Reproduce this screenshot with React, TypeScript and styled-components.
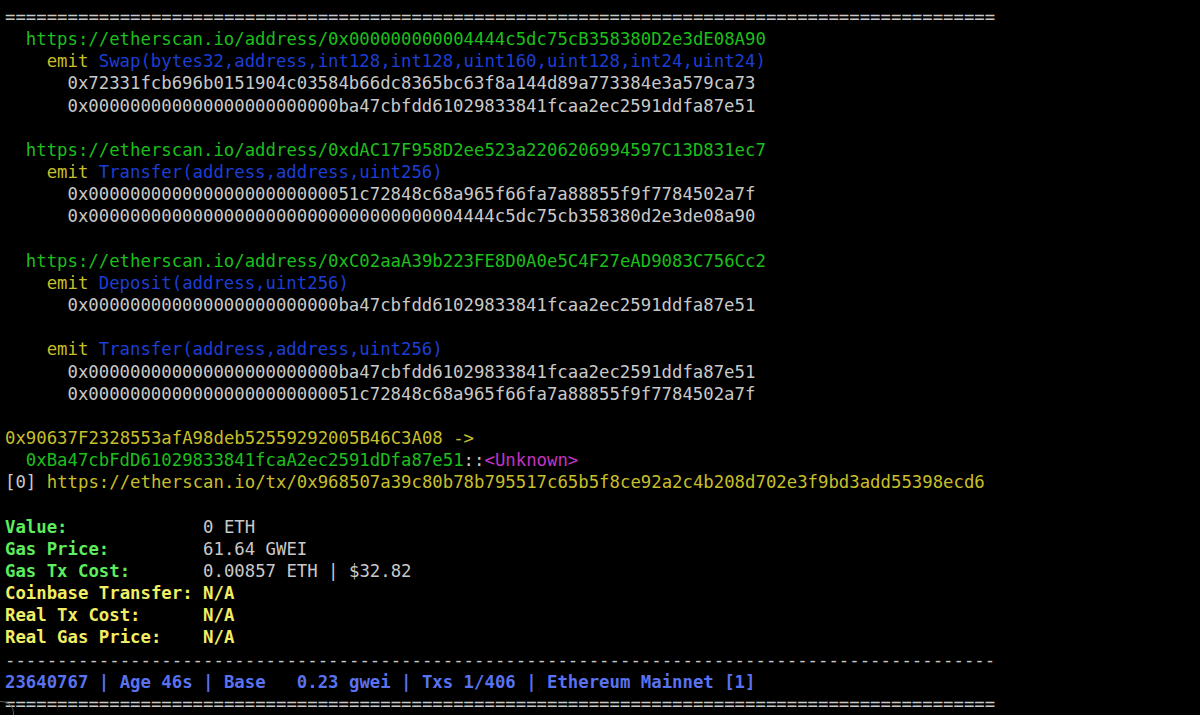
import React from "react";
import styled, { createGlobalStyle } from "styled-components";

const Global = createGlobalStyle`
  html, body { margin: 0; padding: 0; background: #000; }
  #root { min-height: 715px; }
`;

const Terminal = styled.div`
  box-sizing: border-box;
  width: 1200px;
  height: 715px;
  overflow: hidden;
  background: #000;
  padding: 6px 0 0 5px;
  font-family: "DejaVu Sans Mono", "Liberation Mono", monospace;
  font-size: 17.32px;
  line-height: 22.16px;
  color: #c9c9c9;
  white-space: pre;
  position: relative;
`;

const Corner = styled.div`
  position: absolute;
  left: -12px;
  bottom: -12px;
  width: 24px;
  height: 24px;
  border: 1px solid #5a5a5a;
  border-radius: 12px;
`;

const Line = styled.div<{ $indent?: number }>`
  height: 22.16px;
  padding-left: ${(p) => (p.$indent ?? 0) * 10.41}px;
`;

const palette = {
  green: "#1cbf1c",
  yellow: "#c7bf2a",
  blue: "#1d3ed6",
  magenta: "#c433c4",
  grey: "#c9c9c9",
  bgreen: "#5ded5d",
  byellow: "#f2ee63",
  bblue: "#5a72f0",
};

type Tone = keyof typeof palette;

const Txt = styled.span<{ $tone: Tone; $bold?: boolean }>`
  color: ${(p) => palette[p.$tone]};
  font-weight: ${(p) => (p.$bold ? 700 : 400)};
`;

const Sep = styled.div`
  height: 22.16px;
  color: #c9c9c9;
`;

const eq = "=".repeat(95);
const dash = "-".repeat(95);
const pad = (addr: string) => "0x" + "0".repeat(24) + addr;

type Event = { name: string; hex: string[] };
type Block = { url?: string; events: Event[] };

const blocks: Block[] = [
  {
    url: "https://etherscan.io/address/0x000000000004444c5dc75cB358380D2e3dE08A90",
    events: [
      {
        name: "Swap(bytes32,address,int128,int128,uint160,uint128,int24,uint24)",
        hex: [
          "0x72331fcb696b0151904c03584b66dc8365bc63f8a144d89a773384e3a579ca73",
          pad("ba47cbfdd61029833841fcaa2ec2591ddfa87e51"),
        ],
      },
    ],
  },
  {
    url: "https://etherscan.io/address/0xdAC17F958D2ee523a2206206994597C13D831ec7",
    events: [
      {
        name: "Transfer(address,address,uint256)",
        hex: [
          pad("51c72848c68a965f66fa7a88855f9f7784502a7f"),
          pad("000000000004444c5dc75cb358380d2e3de08a90"),
        ],
      },
    ],
  },
  {
    url: "https://etherscan.io/address/0xC02aaA39b223FE8D0A0e5C4F27eAD9083C756Cc2",
    events: [
      {
        name: "Deposit(address,uint256)",
        hex: [pad("ba47cbfdd61029833841fcaa2ec2591ddfa87e51")],
      },
    ],
  },
  {
    events: [
      {
        name: "Transfer(address,address,uint256)",
        hex: [
          pad("ba47cbfdd61029833841fcaa2ec2591ddfa87e51"),
          pad("51c72848c68a965f66fa7a88855f9f7784502a7f"),
        ],
      },
    ],
  },
];

const stats: { label: string; value: string; tone: Tone; valueTone: Tone; bold: boolean }[] = [
  { label: "Value:", value: "0 ETH", tone: "bgreen", valueTone: "grey", bold: false },
  { label: "Gas Price:", value: "61.64 GWEI", tone: "bgreen", valueTone: "grey", bold: false },
  { label: "Gas Tx Cost:", value: "0.00857 ETH | $32.82", tone: "bgreen", valueTone: "grey", bold: false },
  { label: "Coinbase Transfer:", value: "N/A", tone: "byellow", valueTone: "byellow", bold: true },
  { label: "Real Tx Cost:", value: "N/A", tone: "byellow", valueTone: "byellow", bold: true },
  { label: "Real Gas Price:", value: "N/A", tone: "byellow", valueTone: "byellow", bold: true },
];

export default function App() {
  return (
    <>
      <Global />
      <Terminal>
        <Sep>{eq}</Sep>
        {blocks.map((b, i) => (
          <React.Fragment key={i}>
            {b.url && (
              <Line $indent={2}>
                <Txt $tone="green">{b.url}</Txt>
              </Line>
            )}
            {b.events.map((e, j) => (
              <React.Fragment key={j}>
                <Line $indent={4}>
                  <Txt $tone="yellow">emit </Txt>
                  <Txt $tone="blue">{e.name}</Txt>
                </Line>
                {e.hex.map((h, k) => (
                  <Line key={k} $indent={6}>
                    <Txt $tone="grey">{h}</Txt>
                  </Line>
                ))}
              </React.Fragment>
            ))}
            <Line> </Line>
          </React.Fragment>
        ))}
        <Line>
          <Txt $tone="yellow">0x90637F2328553afA98deb52559292005B46C3A08 -&gt;</Txt>
        </Line>
        <Line $indent={2}>
          <Txt $tone="green">0xBa47cbFdD61029833841fcaA2ec2591dDfa87e51</Txt>
          <Txt $tone="grey">::</Txt>
          <Txt $tone="magenta">&lt;Unknown&gt;</Txt>
        </Line>
        <Line>
          <Txt $tone="grey">[0] </Txt>
          <Txt $tone="yellow">
            https://etherscan.io/tx/0x968507a39c80b78b795517c65b5f8ce92a2c4b208d702e3f9bd3add55398ecd6
          </Txt>
        </Line>
        <Line> </Line>
        {stats.map((s) => (
          <Line key={s.label}>
            <Txt $tone={s.tone} $bold>
              {s.label.padEnd(19, " ")}
            </Txt>
            <Txt $tone={s.valueTone} $bold={s.bold}>
              {s.value}
            </Txt>
          </Line>
        ))}
        <Sep>{dash}</Sep>
        <Line>
          <Txt $tone="bblue" $bold>
            23640767 | Age 46s | Base   0.23 gwei | Txs 1/406 | Ethereum Mainnet [1]
          </Txt>
        </Line>
        <Sep>{eq}</Sep>
        <Corner />
      </Terminal>
    </>
  );
}
